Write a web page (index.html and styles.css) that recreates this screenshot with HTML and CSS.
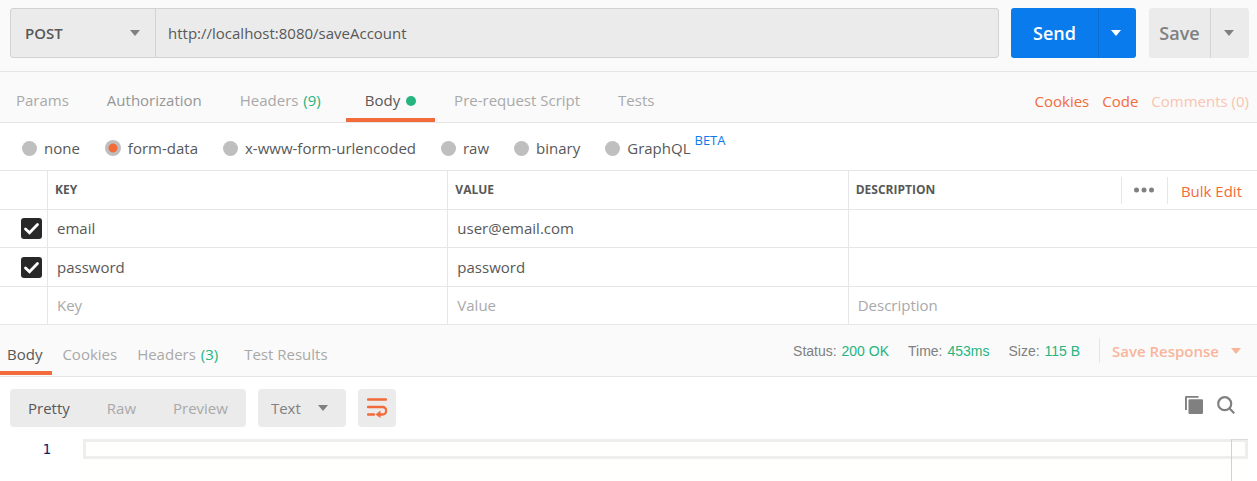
FILE: index.html
```
<!DOCTYPE html>
<html lang="en">
<head>
<meta charset="utf-8">
<meta name="viewport" content="width=device-width, initial-scale=1">
<title>POST saveAccount</title>
<link rel="stylesheet" href="styles.css">
</head>
<body>
<main class="app">
  <form class="request-bar">
    <div class="request-line">
      <div class="picker method">
        <select class="picker-select" aria-label="HTTP method"><option>POST</option><option>GET</option></select>
        <svg class="caret" viewBox="0 0 10 6" aria-hidden="true"><path d="M0 0h10L5 6z"/></svg>
      </div>
      <input class="url" type="text" aria-label="Request URL" value="http://localhost:8080/saveAccount">
    </div>
    <div class="split split-send">
      <button class="split-main" type="button">Send</button>
      <button class="split-more" type="button" aria-label="Send options"><svg class="caret" viewBox="0 0 10 6" aria-hidden="true"><path d="M0 0h10L5 6z"/></svg></button>
    </div>
    <div class="split split-save">
      <button class="split-main" type="button">Save</button>
      <button class="split-more" type="button" aria-label="Save options"><svg class="caret" viewBox="0 0 10 6" aria-hidden="true"><path d="M0 0h10L5 6z"/></svg></button>
    </div>
  </form>

  <div class="request-tabs">
    <nav class="tabs">
      <button class="tab" type="button">Params</button>
      <button class="tab tab-strong" type="button">Authorization</button>
      <button class="tab tab-counted" type="button">Headers <span class="count">(9)</span></button>
      <button class="tab tab-active" type="button">Body <span class="dot"></span></button>
      <button class="tab" type="button">Pre-request Script</button>
      <button class="tab" type="button">Tests</button>
    </nav>
    <div class="links">
      <a class="link" href="#cookies">Cookies</a>
      <a class="link" href="#code">Code</a>
      <a class="link link-faded" href="#comments">Comments (0)</a>
    </div>
  </div>

  <div class="body-types" role="radiogroup" aria-label="Body type">
    <label class="choice"><input class="radio" type="radio" name="type">none</label>
    <label class="choice"><input class="radio" type="radio" name="type" checked>form-data</label>
    <label class="choice"><input class="radio" type="radio" name="type">x-www-form-urlencoded</label>
    <label class="choice"><input class="radio" type="radio" name="type">raw</label>
    <label class="choice"><input class="radio" type="radio" name="type">binary</label>
    <label class="choice"><input class="radio" type="radio" name="type">GraphQL<span class="beta">BETA</span></label>
  </div>

  <table class="params">
    <colgroup><col class="col-check"><col class="col-field"><col class="col-field"><col></colgroup>
    <thead>
      <tr>
        <th></th>
        <th>KEY</th>
        <th>VALUE</th>
        <th>
          <div class="head-row">
            <span>DESCRIPTION</span>
            <div class="head-actions">
              <button class="more" type="button" aria-label="Columns"><svg class="more-icon" viewBox="0 0 20 6" aria-hidden="true"><circle cx="2.5" cy="3" r="2.5"/><circle cx="10" cy="3" r="2.5"/><circle cx="17.5" cy="3" r="2.5"/></svg></button>
              <button class="bulk" type="button">Bulk Edit</button>
            </div>
          </div>
        </th>
      </tr>
    </thead>
    <tbody>
      <tr>
        <td class="check-cell"><input class="check" type="checkbox" aria-label="Use email" checked></td>
        <td><input class="cell" type="text" aria-label="Key 1" value="email"></td>
        <td><input class="cell" type="text" aria-label="Value 1" value="user@email.com"></td>
        <td><input class="cell" type="text" aria-label="Description 1"></td>
      </tr>
      <tr>
        <td class="check-cell"><input class="check" type="checkbox" aria-label="Use password" checked></td>
        <td><input class="cell" type="text" aria-label="Key 2" value="password"></td>
        <td><input class="cell" type="text" aria-label="Value 2" value="password"></td>
        <td><input class="cell" type="text" aria-label="Description 2"></td>
      </tr>
      <tr>
        <td></td>
        <td><input class="cell" type="text" aria-label="New key" placeholder="Key"></td>
        <td><input class="cell" type="text" aria-label="New value" placeholder="Value"></td>
        <td><input class="cell" type="text" aria-label="New description" placeholder="Description"></td>
      </tr>
    </tbody>
  </table>

  <section class="response">
    <div class="response-head">
      <nav class="tabs tabs-tight">
        <button class="tab tab-active" type="button">Body</button>
        <button class="tab" type="button">Cookies</button>
        <button class="tab tab-counted" type="button">Headers <span class="count">(3)</span></button>
        <button class="tab" type="button">Test Results</button>
      </nav>
      <div class="meta">
        <span class="stat">Status: <b class="stat-value">200 OK</b></span>
        <span class="stat">Time: <b class="stat-value">453ms</b></span>
        <span class="stat">Size: <b class="stat-value">115 B</b></span>
        <button class="save-response" type="button">Save Response <svg class="caret" viewBox="0 0 10 6" aria-hidden="true"><path d="M0 0h10L5 6z"/></svg></button>
      </div>
    </div>

    <div class="viewer-bar">
      <div class="modes">
        <button class="mode mode-active" type="button">Pretty</button>
        <button class="mode" type="button">Raw</button>
        <button class="mode" type="button">Preview</button>
      </div>
      <div class="picker format">
        <select class="picker-select" aria-label="Format"><option>Text</option><option>JSON</option></select>
        <svg class="caret" viewBox="0 0 10 6" aria-hidden="true"><path d="M0 0h10L5 6z"/></svg>
      </div>
      <button class="wrap" type="button" aria-label="Wrap lines">
        <svg class="wrap-icon" viewBox="0 0 20 20" aria-hidden="true"><path class="wrap-line" d="M1 1.5h18M1 9h14.500a3.700 3.700 0 0 1 0 7.500H12M1 16.500h6"/><path class="wrap-head" d="M13.500 12.500v7.500L8.500 16.500z"/></svg>
      </button>
      <div class="tools">
        <button class="tool" type="button" aria-label="Copy"><svg class="tool-icon" viewBox="0 0 18 18" aria-hidden="true"><path class="fill" d="M0 1.200Q0 0 1.200 0H13.500V1.800H1.900V14H0z"/><rect class="fill" x="3.500" y="3.200" width="14.500" height="14.800" rx="1.200"/></svg></button>
        <button class="tool" type="button" aria-label="Search"><svg class="tool-icon" viewBox="0 0 18 18" aria-hidden="true"><circle class="stroke" cx="7.700" cy="7.700" r="6.500"/><path class="stroke" d="M12.300 12.300l5 5"/></svg></button>
      </div>
    </div>

    <div class="editor">
      <span class="line-number">1</span>
      <div class="code">
        <div class="code-line"></div>
        <div class="ruler"></div>
      </div>
    </div>
  </section>
</main>
</body>
</html>
```

FILE: styles.css
```
* { box-sizing: border-box; }

body {
  margin: 0;
  background: #fff;
  color: #585858;
  font: 15px/20px "Open Sans", sans-serif;
}

button, input, select {
  margin: 0;
  padding: 0;
  border: 0;
  background: none;
  color: inherit;
  font: inherit;
}

.app {
  display: flex;
  flex-direction: column;
  min-height: 100vh;
}

.caret {
  width: 10px;
  height: 6px;
  fill: currentColor;
}

/* Request line */
.request-bar {
  display: flex;
  padding: 8px 8px 13px 10px;
  border-bottom: 1px solid #e6e6e6;
  background: #fafafa;
}

.request-line {
  display: flex;
  flex: 1;
  height: 50px;
  margin-right: 12px;
  border: 1px solid #d2d2d2;
  border-radius: 3px;
  background: #ebebeb;
}

.picker {
  display: grid;
  align-items: center;
}

.picker > * { grid-area: 1 / 1; }

.picker .caret {
  justify-self: end;
  color: #808080;
  pointer-events: none;
}

.picker-select {
  appearance: none;
  width: 100%;
  height: 100%;
}

.method {
  width: 145px;
  border-right: 1px solid #d2d2d2;
}

.method .picker-select {
  padding-left: 14px;
  font-weight: 600;
}

.method .caret { margin-right: 15px; }

.url {
  flex: 1;
  min-width: 0;
  padding: 0 12px;
}

.split {
  display: flex;
  overflow: hidden;
  border-radius: 3px;
  font-size: 18px;
  font-weight: 600;
}

.split-more {
  display: grid;
  place-items: center;
  width: 38px;
  padding-right: 3px;
  border-left: 1px solid;
}

.split-send {
  margin-right: 13px;
  background: #097bed;
  color: #fff;
}

.split-send .split-main { width: 87px; }
.split-send .split-more { border-color: #0a6fd3; }

.split-save {
  background: #ebebeb;
  color: #808080;
}

.split-save .split-main { width: 61px; }
.split-save .split-more { width: 39px; border-color: #d4d4d4; }

/* Tabs */
.request-tabs {
  display: flex;
  justify-content: space-between;
  border-bottom: 1px solid #e6e6e6;
  background: #fafafa;
}

.tabs { display: flex; }

.tab {
  padding: 18px 19px 8px;
  border-bottom: 4px solid transparent;
  color: #a9a9a9;
  white-space: nowrap;
}

.tab:first-child { padding-left: 16px; }
.tab-strong { color: #969696; }
.tab-counted { margin-right: 6px; }

.tab-active {
  border-color: #f26b3a;
  color: #585858;
}

.count {
  margin-left: 1px;
  color: #26b47f;
}

.dot {
  display: inline-block;
  width: 10px;
  height: 10px;
  margin-left: 2px;
  border-radius: 50%;
  background: #26b47f;
}

.links {
  display: flex;
  align-items: center;
  gap: 13px;
  padding: 8px 8px 0 0;
}

.link {
  color: #f26b3a;
  text-decoration: none;
}

.link-faded { color: #f9c4b0; }

/* Body type choices */
.body-types {
  display: flex;
  gap: 25px;
  padding: 15px 22px 12px;
  border-bottom: 1px solid #e6e6e6;
}

.choice {
  display: flex;
  align-items: center;
  gap: 7px;
}

.radio {
  appearance: none;
  width: 15px;
  height: 15px;
  border-radius: 50%;
  background: #bfbfbf;
}

.radio:checked {
  width: 16px;
  height: 16px;
  background: radial-gradient(circle, #f26b3a 4px, #bfbfbf 5px);
}

.beta {
  align-self: flex-start;
  margin: -8px 0 0 -3px;
  color: #097bed;
  font-size: 13px;
  font-weight: 500;
}

/* Form data table */
.params {
  width: 100%;
  border-collapse: separate;
  border-spacing: 0;
  table-layout: fixed;
}

.col-check { width: 48px; }
.col-field { width: 31.85%; }

th, td {
  height: 38px;
  padding: 0;
  border-right: 1px solid #e6e6e6;
  border-bottom: 1px solid #e6e6e6;
}

th:last-child, td:last-child { border-right: 0; }

th {
  height: 39px;
  padding-left: 7px;
  font-size: 12px;
  font-weight: 700;
  text-align: left;
}

.head-row, .head-actions {
  display: flex;
  align-items: center;
}

.head-row { justify-content: space-between; }

.more {
  display: grid;
  place-items: center;
  width: 47px;
  height: 27px;
  border-left: 1px solid #e6e6e6;
  border-right: 1px solid #e6e6e6;
}

.more-icon {
  width: 20px;
  height: 6px;
  fill: #808080;
}

.bulk {
  padding: 2px 15px 0 13px;
  color: #f26b3a;
  font-size: 15px;
  font-weight: 400;
}

.check-cell { padding-left: 21px; }

.check {
  display: block;
  appearance: none;
  width: 21px;
  height: 21px;
  border-radius: 3px;
  background: #282828;
}

.check:checked {
  background-image: url("data:image/svg+xml,%3Csvg xmlns='http://www.w3.org/2000/svg' viewBox='0 0 21 21'%3E%3Cpath d='M4.500 11l4 3.800 8-8.300' fill='none' stroke='white' stroke-width='2.800' stroke-linecap='round'/%3E%3C/svg%3E");
}

.cell {
  display: block;
  width: 100%;
  height: 37px;
  padding: 0 9px 1px;
}

.cell::placeholder { color: #a9a9a9; opacity: 1; }

tbody tr:nth-child(2) td { height: 39px; }

/* Response */
.response {
  display: flex;
  flex: 1;
  flex-direction: column;
}

.response-head {
  display: flex;
  justify-content: space-between;
  border-bottom: 1px solid #e6e6e6;
  background: #fafafa;
}

.tabs-tight { padding-bottom: 1px; }
.tabs-tight .tab { padding: 19px 10px 7px; }
.tabs-tight .tab:first-child { padding-left: 7px; }

.meta {
  display: flex;
  align-items: center;
  gap: 19px;
  padding-right: 16px;
  color: #808080;
  font: 14px/20px "Liberation Sans", sans-serif;
}

.stat-value {
  margin-left: 1px;
  color: #26b47f;
  font-weight: 400;
}

.save-response {
  display: flex;
  align-items: center;
  gap: 12px;
  height: 25px;
  padding-left: 12px;
  border-left: 1px solid #e6e6e6;
  color: #f8b59c;
  font: 600 15px/20px "Open Sans", sans-serif;
}

.viewer-bar {
  display: flex;
  padding: 12px 22px 12px 10px;
}

.modes, .format, .wrap {
  height: 38px;
  border-radius: 4px;
  background: #ebebeb;
}

.modes { display: flex; }

.mode {
  padding: 0 19px 0 18px;
  color: #a9a9a9;
}

.mode:last-child { padding-right: 18px; }
.mode-active { color: #585858; }

.format {
  width: 88px;
  margin: 0 12px;
  color: #808080;
}

.format .picker-select { padding-left: 13px; }
.format .caret { margin-right: 18px; }

.wrap {
  display: grid;
  place-items: center;
  width: 38px;
}

.wrap-icon { width: 20px; height: 20px; }
.wrap-line { fill: none; stroke: #f26b3a; stroke-width: 2.4; stroke-linecap: round; }
.wrap-head { fill: #f26b3a; }

.tools {
  display: flex;
  align-items: center;
  gap: 14px;
  margin-left: auto;
  padding-bottom: 6px;
}

.tool { display: grid; }
.tool-icon { width: 18px; height: 18px; }
.fill { fill: #808080; }
.stroke { fill: none; stroke: #808080; stroke-width: 2.2; }

.editor {
  display: flex;
  flex: 1;
  padding-right: 9px;
}

.line-number {
  width: 83px;
  padding-right: 32px;
  color: #0b216f;
  font: 14px/20px "DejaVu Sans Mono", monospace;
  text-align: right;
}

.code {
  position: relative;
  flex: 1;
  background: #fffffe;
}

.code-line {
  height: 20px;
  border: 3px solid #eee;
}

/* Overview ruler drawn over the right end of the code area */
.ruler {
  position: absolute;
  inset: 0 0 0 auto;
  width: 17px;
  border-top: 1px solid #dadada;
  border-left: 1px solid #d0d0d0;
}
```
